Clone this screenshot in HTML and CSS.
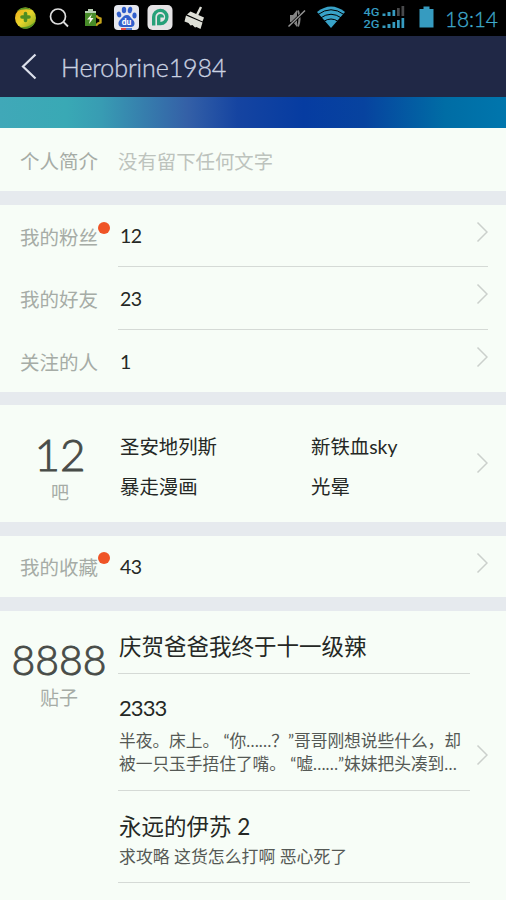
FILE: index.html
```html
<!DOCTYPE html>
<html lang="zh-CN">
<head>
<meta charset="utf-8">
<title>Herobrine1984</title>
<link rel="stylesheet" href="styles.css">
</head>
<body>
<header class="status">
  <svg class="status-icons" width="215" height="36" viewBox="0 0 215 36">
    <defs>
      <linearGradient id="orb" x1="0" y1="0" x2="1" y2="1"><stop offset="0" stop-color="#f0a818"/><stop offset=".5" stop-color="#e8d52c"/><stop offset="1" stop-color="#79a51b"/></linearGradient>
    </defs>
    <circle cx="25.500" cy="18" r="10.500" fill="url(#orb)"/>
    <path d="M17 11.500C20 7 27 6 32 10c-5-1.500-11-1-15 1.500zM35.500 21c-2 7-10 10-16 6 7 1 13-2 16-6z" fill="#589424"/>
    <path d="M25.500 13.500v7M22 17h7" stroke="#4f8d22" stroke-width="3.600" stroke-linecap="round"/>
    <circle cx="58" cy="16.500" r="7.500" fill="none" stroke="#dedede" stroke-width="1.700"/>
    <path d="M63.500 22l4.500 4.500" stroke="#dedede" stroke-width="1.800"/>
    <path d="M96 15.500l2 2 2.500 1v4l-2.500 1-2 2" fill="none" stroke="#c6a51b" stroke-width="2.400"/>
    <path d="M88 9h5v2h3v15H85V11h3z" fill="#478b28"/><path d="M88 9h5v2h3v2H85v-2h3z" fill="#b5ceb0"/>
    <path d="M92 14l-5 5.500h3l-1 4.500 4.500-6h-3z" fill="#f7f7eb"/>
    <rect x="114" y="5" width="25" height="25" rx="4" fill="#e5e7ef"/>
    <g fill="#315fcb"><ellipse cx="119" cy="14.500" rx="2.200" ry="2.900" transform="rotate(-15 119 14.500)"/><ellipse cx="124" cy="10" rx="2.200" ry="3.200"/><ellipse cx="130" cy="10" rx="2.200" ry="3.200" transform="rotate(12 130 10)"/><ellipse cx="134.500" cy="15.500" rx="2.100" ry="2.900"/><path d="M127 15c2.500 0 3 2 5 4 4 3 3 8-1 8h-9c-4 0-5-5-1-8 2-2 3-4 6-4z"/></g>
    <text class="du" x="126.500" y="25" text-anchor="middle">du</text>
    <path d="M121 28h5v2h-5z" fill="#e34a43"/><path d="M126 28h6v2h-6z" fill="#547bd2"/>
    <rect x="147.500" y="5" width="25" height="25" rx="5" fill="#e5e3e5"/>
    <path d="M153.700 25.500V17a6.600 6.600 0 1 1 6.800 6.600h-1.800v-6.100a1.800 1.800 0 0 1 3.600 0" fill="none" stroke="#26a079" stroke-width="3.400"/>
    <path d="M201 7l-4 8" stroke="#dedfd7" stroke-width="2.400"/><path d="M190.500 11.500L204 17.500l-1.500 4-15.500-7z" fill="#dedfd7"/><path d="M186 15.500l16.500 7-2 6.500-4-2-1.500.5-2.500-2.500-2 .5-2-2.500-4-1.500z" fill="#dedfd7"/>
  </svg>
  <svg class="status-right" width="221" height="36" viewBox="285 0 221 36">
    <path d="M290 15h3l4-5v17l-4-5h-3z" fill="#858585"/><path d="M298 10.500q3 8 0 16" fill="none" stroke="#858585" stroke-width="2"/><path d="M288.500 26.500L305 10.500" stroke="#000" stroke-width="3"/><path d="M288.500 26.500L305 10.500" stroke="#969696" stroke-width="1.500"/>
    <path d="M317 12q14-11 28 0L331 28z" fill="#38a2c8"/>
    <path d="M318 14.500q13-9.500 26 0M320.500 18q10.500-7.500 21 0M323.500 21.500q7.500-5 15 0" fill="none" stroke="#000" stroke-width="1"/>
    <g class="net"><text x="363.500" y="15.800" textLength="16" lengthAdjust="spacingAndGlyphs">4G</text><text x="363.500" y="28" textLength="16" lengthAdjust="spacingAndGlyphs">2G</text></g>
    <g fill="#369bc0"><path d="M382.500 13.500h3V16h-3zM387.500 12h3v4h-3zM392.500 10h2.700v6h-2.700zM382.500 25.500h3V28h-3zM387.500 24h3v4h-3zM392.500 22h2.700v6h-2.700zM397 20h2.700v8H397zM401.500 18h2.700v10h-2.700zM419.500 9h4V6.500h6V9h4v18.500h-14z"/></g>
    <path d="M397 8h2.700v8H397zM401.500 6h2.700v10h-2.700z" fill="#48494b"/>
    <text class="clock" x="445" y="27" textLength="53">18:14</text>
  </svg>
</header>
<nav class="title-bar">
  <svg width="18" height="28" viewBox="0 0 18 28"><path d="M15.500 1.500L3 13.500l12.500 12" fill="none" stroke="#dce0eb" stroke-width="2.200"/></svg>
  <h1>Herobrine1984</h1>
</nav>
<div class="banner"></div>
<main>
  <section class="card intro"><span class="label">个人简介</span><span class="empty">没有留下任何文字</span></section>
  <section class="card list">
    <div class="row"><span class="label">我的粉丝<i class="dot"></i></span><div class="value"><span>12</span><svg class="chev" width="12" height="22" viewBox="0 0 12 22"><path d="M1.500 1.500L11 11l-9.500 9.500"/></svg></div></div>
    <div class="row"><span class="label">我的好友</span><div class="value"><span>23</span><svg class="chev" width="12" height="22" viewBox="0 0 12 22"><path d="M1.500 1.500L11 11l-9.500 9.500"/></svg></div></div>
    <div class="row"><span class="label">关注的人</span><div class="value"><span>1</span><svg class="chev" width="12" height="22" viewBox="0 0 12 22"><path d="M1.500 1.500L11 11l-9.500 9.500"/></svg></div></div>
  </section>
  <section class="card forums">
    <div class="count"><strong>12</strong><span>吧</span></div>
    <div class="names"><span>圣安地列斯</span><span>新铁血sky</span><span>暴走漫画</span><span>光晕</span></div>
    <svg class="chev" width="12" height="22" viewBox="0 0 12 22"><path d="M1.500 1.500L11 11l-9.500 9.500"/></svg>
  </section>
  <section class="card favorites">
    <div class="row"><span class="label">我的收藏<i class="dot"></i></span><div class="value"><span>43</span><svg class="chev" width="12" height="22" viewBox="0 0 12 22"><path d="M1.500 1.500L11 11l-9.500 9.500"/></svg></div></div>
  </section>
  <section class="card posts">
    <div class="count"><strong>8888</strong><span>贴子</span></div>
    <div class="post-list">
      <article class="post first"><h2>庆贺爸爸我终于十一级辣</h2></article>
      <article class="post second"><h2 class="latin">2333</h2><p><span class="line">半夜。床上。 “你<span class="dots">……</span>？”哥哥刚想说些什么，却</span><span class="line">被一只玉手捂住了嘴。 “嘘<span class="dots">……</span>”妹妹把头凑到<span class="dots">…</span></span></p></article>
      <article class="post third"><h2>永远的伊苏 2</h2><p>求攻略 这货怎么打啊 恶心死了</p></article>
    </div>
    <svg class="chev" width="12" height="22" viewBox="0 0 12 22"><path d="M1.500 1.500L11 11l-9.500 9.500"/></svg>
  </section>
</main>
</body>
</html>
```
FILE: styles.css
```css
* { box-sizing: border-box; }
body { margin: 0; width: 506px; height: 900px; overflow: hidden; background: #e6eaee; color: #252825; font-family: Lato, "Noto Sans CJK SC", sans-serif; }
svg { display: block; flex: none; }
h1, h2, p { margin: 0; font-weight: 400; }
.status { display: flex; justify-content: space-between; height: 36px; background: #000; }
.du { font: bold 8.500px Roboto, sans-serif; fill: #fff; }
.net { font: 500 10.400px/1 Roboto, sans-serif; fill: #369bc0; }
.clock { font: 300 21px Lato, sans-serif; fill: #3fa9cc; stroke: #3fa9cc; stroke-width: .3px; }
.title-bar { display: flex; align-items: center; height: 61px; padding: 0 20px; background: #202846; color: #cbd3e2; }
.title-bar h1 { margin: 1px 0 0 23px; font-size: 25px; font-weight: 300; line-height: 30px; letter-spacing: -.1px; -webkit-text-stroke: .3px #cbd3e2; }
.banner { height: 31px; background: linear-gradient(90deg, #40a8b8 0%, #39a9b5 13%, #389cb3 20%, #3460a7 37%, #1544a1 47%, #063ca1 60%, #07439f 72%, #006da5 88%, #0076ad 100%); }
main { display: flex; flex-direction: column; gap: 13.500px; }
.card { background: #f7fdf7; display: flex; }
.intro { height: 63px; align-items: center; padding-top: 4px; }
.label { position: relative; width: 98px; margin-left: 20px; color: #a6aca6; font-size: 19.500px; line-height: 28px; white-space: nowrap; }
.empty { color: #bdc3bd; font-size: 19.400px; line-height: 28px; }
.list { display: block; height: 187px; }
.row { display: flex; align-items: center; width: 100%; height: 62.500px; }
.row .label { padding-top: 4px; }
.value { width: 370px; height: 100%; display: flex; align-items: center; justify-content: space-between; padding: 0 0 0 2px; border-bottom: 1px solid #d5dad6; font-size: 19.500px; letter-spacing: -.5px; }
.value span { padding-top: 1px; }
.value .chev { margin-bottom: 7px; }
.row:last-child .value { border: 0; }
.dot { position: absolute; left: 78px; top: 2px; width: 12px; height: 12px; border-radius: 50%; background: #ef5426; }
.chev { fill: none; stroke: #cbd0cc; stroke-width: 1.500; }
.forums { height: 117px; }
.count { width: 118px; flex: none; text-align: center; color: #a6aca6; }
.count strong { display: block; color: #484c48; font-weight: 300; font-size: 44px; line-height: 50px; white-space: nowrap; -webkit-text-stroke: .9px #484c48; }
.count span { display: block; font-size: 19px; line-height: 24px; }
.forums .count { padding: 24px 0 0 2px; }
.forums .count span { font-size: 18px; padding-top: 1px; }
.names { width: 358px; padding: 22px 0 0 2px; display: grid; grid-template-columns: 191px 1fr; grid-auto-rows: 40px; align-content: start; font-size: 19.400px; line-height: 40px; }
.forums .chev { margin-top: 47px; }
.favorites { height: 61.500px; }
.favorites .row { height: 61px; }
.favorites .dot { top: 2px; }
.posts { height: 303px; }
.posts .count { padding-top: 24px; }
.posts .count strong { font-size: 41px; }
.posts .count span { padding-top: 1px; }
.post-list { width: 352px; margin-right: 6px; }
.post { border-bottom: 1px solid #d5dad6; }
.post h2 { font-size: 22.500px; line-height: 32px; padding-left: 1px; white-space: nowrap; }
.post p { font-size: 16.900px; line-height: 23px; color: #555955; white-space: nowrap; padding: 2px 0 0 1px; }
.post .latin { font-size: 22px; letter-spacing: -.9px; }
.second p { padding-top: 5px; font-size: 16.750px; letter-spacing: -.05px; }
.line { display: block; }
.first { height: 63px; padding-top: 20px; }
.second { height: 117px; padding-top: 18px; }
.third { height: 92px; padding-top: 20px; }
.posts .chev { margin-top: 133px; }
```
